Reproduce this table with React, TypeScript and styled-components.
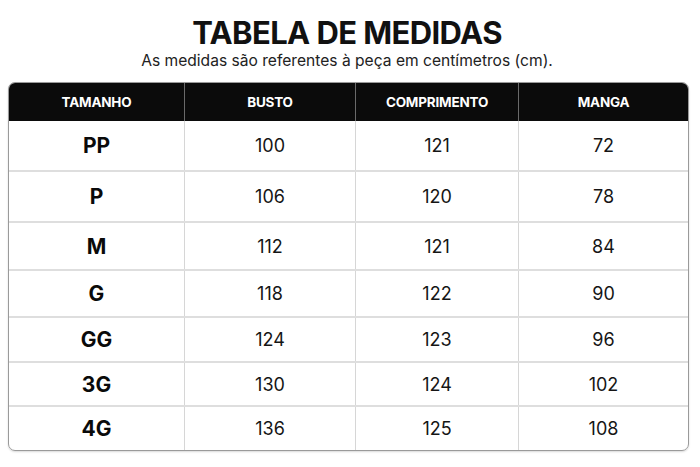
import React from "react";
import styled, { createGlobalStyle } from "styled-components";

const GlobalStyle = createGlobalStyle`
  body {
    margin: 0;
    background: #ffffff;
    font-family: Inter, "Liberation Sans", sans-serif;
    color: #111111;
  }
`;

interface SizeRow {
  size: string;
  busto: number;
  comprimento: number;
  manga: number;
  height: number;
}

const rows: SizeRow[] = [
  { size: "PP", busto: 100, comprimento: 121, manga: 72, height: 51 },
  { size: "P", busto: 106, comprimento: 120, manga: 78, height: 51 },
  { size: "M", busto: 112, comprimento: 121, manga: 84, height: 48 },
  { size: "G", busto: 118, comprimento: 122, manga: 90, height: 47 },
  { size: "GG", busto: 124, comprimento: 123, manga: 96, height: 45 },
  { size: "3G", busto: 130, comprimento: 124, manga: 102, height: 44 },
  { size: "4G", busto: 136, comprimento: 125, manga: 108, height: 43 },
];

const headers = ["TAMANHO", "BUSTO", "COMPRIMENTO", "MANGA"];

const App = () => (
  <Page>
    <GlobalStyle />
    <Title>TABELA DE MEDIDAS</Title>
    <Subtitle>As medidas são referentes à peça em centímetros (cm).</Subtitle>
    <Table>
      <HeaderRow>
        {headers.map((h) => (
          <HeaderCell key={h}>{h}</HeaderCell>
        ))}
      </HeaderRow>
      {rows.map((r, i) => (
        <BodyRow key={r.size} $height={r.height} $last={i === rows.length - 1}>
          <SizeCell>{r.size}</SizeCell>
          <Cell>{r.busto}</Cell>
          <Cell>{r.comprimento}</Cell>
          <Cell>{r.manga}</Cell>
        </BodyRow>
      ))}
    </Table>
  </Page>
);

export default App;

const Page = styled.div`
  width: 700px;
  height: 467px;
  display: flex;
  flex-direction: column;
  align-items: center;
  padding-top: 15px;
  box-sizing: border-box;
`;

const Title = styled.h1`
  margin: 0 0 0 -6px;
  font-size: 31px;
  font-weight: 700;
  line-height: 36px;
  letter-spacing: -0.6px;
  color: #111;
`;

const Subtitle = styled.p`
  margin: 0 0 0 -6px;
  font-size: 15.6px;
  line-height: 20px;
  color: #222;
`;

const Table = styled.div`
  margin-top: 11px;
  width: 679px;
  margin-left: -3px;
  border: 1px solid #9a9a9a;
  border-radius: 7px;
  overflow: hidden;
  box-shadow: 0 1px 2px rgba(0, 0, 0, 0.15);
`;

const grid = `
  display: grid;
  grid-template-columns: 175px 171px 163px 1fr;
`;

const HeaderRow = styled.div`
  ${grid}
  height: 38px;
  background: #0b0b0b;
`;

const HeaderCell = styled.div`
  display: flex;
  align-items: center;
  justify-content: center;
  color: #fff;
  font-size: 13.5px;
  font-weight: 700;
  letter-spacing: -0.2px;
  & + & {
    border-left: 1px solid #6a6a6a;
  }
`;

const BodyRow = styled.div<{ $height: number; $last: boolean }>`
  ${grid}
  height: ${(p) => p.$height}px;
  box-sizing: border-box;
  border-bottom: ${(p) => (p.$last ? "none" : "2px solid #dedede")};
`;

const Cell = styled.div`
  display: flex;
  align-items: center;
  justify-content: center;
  font-size: 18px;
  color: #151515;
  border-left: 1px solid #d6d6d6;
`;

const SizeCell = styled(Cell)`
  font-size: 21px;
  font-weight: 700;
  border-left: none;
  color: #0a0a0a;
`;
